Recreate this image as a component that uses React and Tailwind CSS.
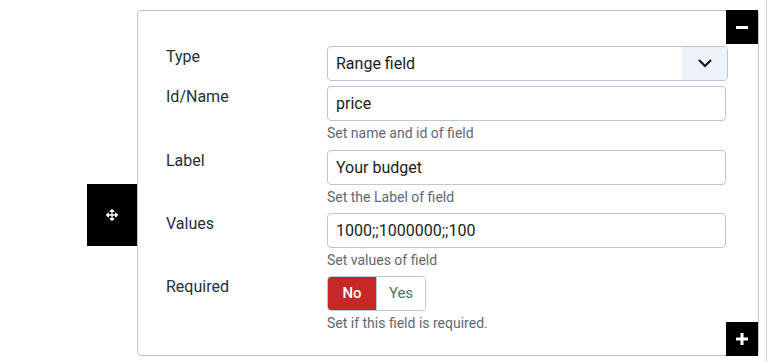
import { FaArrowsAlt } from "react-icons/fa";

function HelpText({ children }) {
    return (
        <div className="mt-[2px] text-[14px] leading-5 text-[#5f6873]">{children}</div>
    );
}

function Row({ label, children, className = "" }) {
    return (
        <div className={`flex ${className}`}>
            <div className="w-[161px] shrink-0 pt-px text-[16px] leading-5 text-[#22303e]">{label}</div>
            <div className="flex-1">{children}</div>
        </div>
    );
}

function TextInput({ value }) {
    return (
        <div className="h-[35px] w-[399px] rounded-[4px] border border-[#b9c7dc] bg-white px-2 flex items-center text-[16px] text-[#1a1e23]">
            {value}
        </div>
    );
}

export default function App() {
    return (
        <div
            className="relative w-[768px] h-[361px] overflow-hidden bg-white"
            style={{ fontFamily: "Roboto, 'Liberation Sans', sans-serif" }}
        >
            <div className="absolute right-[1px] top-0 h-full border-r border-[#c6d2e4]" />
            <div className="relative ml-[137px] mt-[10px] w-[622px] h-[346px] rounded-[4px] border border-[#b9c7dc] pl-[28px] pt-[35px]">
                <Row label="Type">
                    <div className="h-[35px] w-[401px] rounded-[4px] border border-[#b9c7dc] bg-white flex overflow-hidden">
                        <div className="flex-1 flex items-center pl-2 text-[16px] text-[#1a1e23]">Range field</div>
                        <div className="w-[45px] bg-[#eef3fa] flex items-center justify-center">
                            <svg width="14" height="9" viewBox="0 0 14 9" fill="none">
                                <path d="M1.5 1.5 L7 7 L12.5 1.5" stroke="#111" strokeWidth="2" strokeLinecap="round" />
                            </svg>
                        </div>
                    </div>
                </Row>
                <Row label="Id/Name" className="mt-[5px]">
                    <TextInput value="price" />
                    <HelpText>Set name and id of field</HelpText>
                </Row>
                <Row label="Label" className="mt-[7px]">
                    <TextInput value="Your budget" />
                    <HelpText>Set the Label of field</HelpText>
                </Row>
                <Row label="Values" className="mt-[6px]">
                    <TextInput value="1000;;1000000;;100" />
                    <HelpText>Set values of field</HelpText>
                </Row>
                <Row label="Required" className="mt-[6px]">
                    <div className="flex h-[35px] w-[99px] rounded-[4px] border border-[#b9c7dc] overflow-hidden">
                        <div className="w-[48px] bg-[#c62828] text-white font-medium text-[15px] flex items-center justify-center">No</div>
                        <div className="flex-1 bg-white border-l border-[#b9c7dc] text-[#4b7560] text-[15px] flex items-center justify-center">Yes</div>
                    </div>
                    <HelpText>Set if this field is required.</HelpText>
                </Row>

                <div className="absolute -top-px right-0 w-8 h-[34px] bg-black flex items-center justify-center">
                    <div className="w-[12px] h-[3px] bg-white" />
                </div>
                <div className="absolute -bottom-px right-0 w-8 h-[34px] bg-black flex items-center justify-center">
                    <svg width="12" height="12" viewBox="0 0 12 12">
                        <rect x="4.5" y="0" width="3" height="12" fill="#fff" />
                        <rect x="0" y="4.5" width="12" height="3" fill="#fff" />
                    </svg>
                </div>
                <div className="absolute left-[-51px] top-[173px] w-[50px] h-[62px] bg-black flex items-center justify-center">
                    <FaArrowsAlt className="text-white" size={12} />
                </div>
            </div>
        </div>
    );
}
